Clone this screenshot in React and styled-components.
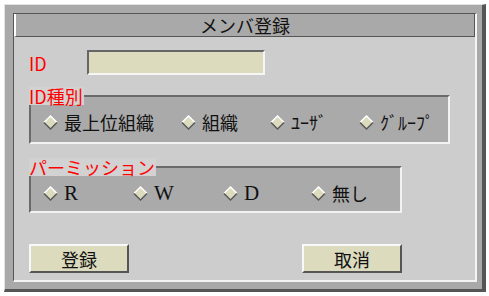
import React from "react";
import styled, {createGlobalStyle} from "styled-components";

const GlobalStyle = createGlobalStyle`
    body {
        margin: 0;
        background-color: #ffffff;
        font-family: "Noto Sans CJK JP", "Noto Sans", sans-serif;
    }
`
const Page = styled.div`
    padding: 4px 0 0 4px;
`
const Outer = styled.div`
    box-sizing: border-box;
    width: 482px;
    height: 288px;
    background-color: #a9a9a9;
    border-top: 1px solid #e2e2e2;
    border-left: 1px solid #e2e2e2;
    border-right: 4px solid #555555;
    border-bottom: 3px solid #555555;
    padding: 8px 5px 7px 8px;
`
const Frame = styled.div`
    box-sizing: border-box;
    height: 100%;
    display: flex;
    flex-direction: column;
    border-top: 1px solid #555555;
    border-left: 1px solid #555555;
    border-right: 2px solid #f4f4f4;
    border-bottom: 2px solid #f4f4f4;
`
const Title = styled.div`
    box-sizing: border-box;
    height: 23px;
    background-color: #a9a9a9;
    border-left: 2px solid #ffffff;
    border-right: 1px solid #555555;
    border-bottom: 1px solid #555555;
    display: flex;
    align-items: center;
    justify-content: center;
    font-size: 18px;
    line-height: 20px;
    color: #111111;
`
const Content = styled.div`
    flex: 1;
    background-color: #cdcdcd;
    padding: 13px 0 0 15px;
    display: flex;
    flex-direction: column;
    align-items: flex-start;
`
const IdRow = styled.div`
    display: flex;
    align-items: center;
    height: 25px;
`
const RedLabel = styled.span`
    width: 58px;
    color: #ff0000;
    font-size: 18px;
    line-height: 20px;
`
const TextBox = styled.input`
    box-sizing: border-box;
    width: 178px;
    height: 25px;
    margin: 0;
    background-color: #dcdbbd;
    border-top: 2px solid #666666;
    border-left: 2px solid #666666;
    border-right: 2px solid #f6f6f6;
    border-bottom: 2px solid #f6f6f6;
    outline: none;
`
const Group = styled.fieldset`
    box-sizing: border-box;
    width: ${p => p.w}px;
    margin: ${p => p.top}px 0 0 0;
    padding: 0 0 ${p => p.bottom}px 12px;
    background-color: #aaaaaa;
    border-top: 2px solid #6a6a6a;
    border-left: 2px solid #6a6a6a;
    border-right: 2px solid #f2f2f2;
    border-bottom: 2px solid #f2f2f2;
    min-width: 0;
`
const Legend = styled.legend`
    margin-left: -14px;
    padding: 0 1px 0 0;
    background-color: #d2d2d2;
    color: #ff0000;
    font-size: 18px;
    line-height: 18px;
    height: 18px;
`
const RadioRow = styled.div`
    display: flex;
    align-items: center;
    height: 34px;
`
const Radio = styled.label`
    display: flex;
    align-items: center;
    gap: 6px;
    width: ${p => p.w ? p.w + 'px' : 'auto'};
    font-family: ${p => p.latin ? '"Liberation Serif", serif' : '"Noto Sans CJK JP", sans-serif'};
    font-size: ${p => p.latin ? '21px' : '18px'};
    line-height: 20px;
    color: #111111;
`
const ButtonRow = styled.div`
    width: 373px;
    margin-top: 31px;
    display: flex;
    justify-content: space-between;
`
const Btn = styled.button`
    box-sizing: border-box;
    width: 100px;
    height: 29px;
    margin: 0;
    padding: 0;
    background-color: #dcdbbd;
    border-top: 2px solid #f8f8f8;
    border-left: 2px solid #f8f8f8;
    border-right: 2px solid #555555;
    border-bottom: 2px solid #555555;
    font-family: "Noto Sans CJK JP", sans-serif;
    font-size: 18px;
    line-height: 20px;
    color: #111111;
`

const Diamond = () => (
    <svg width="15" height="15" viewBox="0 0 15 15">
        <polygon points="7.5,1 14,7.5 7.5,14 1,7.5" fill="#dcdbbd"/>
        <polyline points="1,7.5 7.5,1 14,7.5" fill="none" stroke="#ffffff" strokeWidth="1.5"/>
        <polyline points="1,7.5 7.5,14 14,7.5" fill="none" stroke="#5a5a5a" strokeWidth="1.5"/>
    </svg>
)

const kinds = [
    {label: '最上位組織', w: 138},
    {label: '組織', w: 89},
    {label: 'ﾕｰｻﾞ', w: 89},
    {label: 'ｸﾞﾙｰﾌﾟ'},
]
const perms = [
    {label: 'R', w: 90, latin: true},
    {label: 'W', w: 90, latin: true},
    {label: 'D', w: 88, latin: true},
    {label: '無し'},
]

const App = () => {
    return(
        <Page>
            <GlobalStyle/>
            <Outer>
                <Frame>
                    <Title>メンバ登録</Title>
                    <Content>
                        <IdRow>
                            <RedLabel>ID</RedLabel>
                            <TextBox type="text"/>
                        </IdRow>
                        <Group w={421} top={12} bottom={3}>
                            <Legend>ID種別</Legend>
                            <RadioRow>
                                {kinds.map(k => (
                                    <Radio key={k.label} w={k.w}><Diamond/>{k.label}</Radio>
                                ))}
                            </RadioRow>
                        </Group>
                        <Group w={373} top={14} bottom={1}>
                            <Legend>パーミッション</Legend>
                            <RadioRow>
                                {perms.map(k => (
                                    <Radio key={k.label} w={k.w} latin={k.latin}><Diamond/>{k.label}</Radio>
                                ))}
                            </RadioRow>
                        </Group>
                        <ButtonRow>
                            <Btn>登録</Btn>
                            <Btn>取消</Btn>
                        </ButtonRow>
                    </Content>
                </Frame>
            </Outer>
        </Page>
    )
}

export default App;
